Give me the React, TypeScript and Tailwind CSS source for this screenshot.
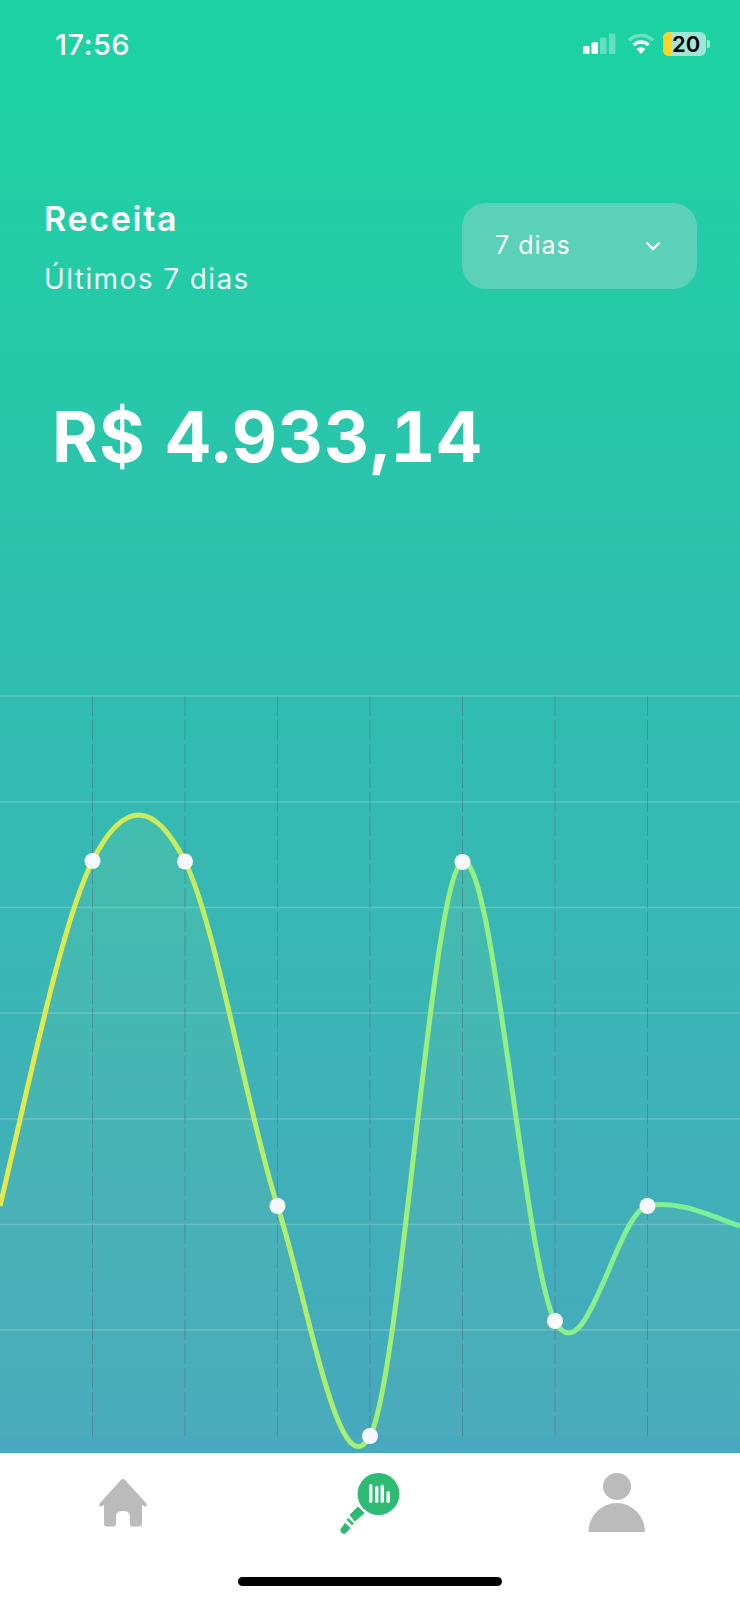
import React from "react";

const pts: [number, number, number][] = [
  [0, 1206, -4.2],
  [92.5, 861, -2.0],
  [185, 861.5, 2.0],
  [277.5, 1206, 3.1],
  [370, 1436, -1.86],
  [462.5, 862, -0.4],
  [555, 1321, 1.86],
  [647.5, 1206, -0.2],
  [740, 1226, 0.35],
];

function curve() {
  let d = `M${pts[0][0]} ${pts[0][1]}`;
  for (let i = 0; i < pts.length - 1; i++) {
    const [x0, y0, m0] = pts[i];
    const [x1, y1, m1] = pts[i + 1];
    const h = (x1 - x0) / 3;
    d += ` C${x0 + h} ${y0 + m0 * h} ${x1 - h} ${y1 - m1 * h} ${x1} ${y1}`;
  }
  return d;
}

function Chart() {
  const d = curve();
  const hs = [696, 802, 907.5, 1013, 1119, 1224.5, 1330];
  const vs = [92.5, 185, 277.5, 370, 462.5, 555, 647.5];
  const dots = pts.slice(1, 8);
  return (
    <svg className="block w-[740px] h-[773px] mt-auto" viewBox="0 680 740 773">
      <defs>
        <linearGradient id="ln" gradientUnits="userSpaceOnUse" x1="0" y1="0" x2="740" y2="0">
          <stop offset="0" stopColor="#e6e94a" />
          <stop offset="0.5" stopColor="#a3ef76" />
          <stop offset="1" stopColor="#76f09b" />
        </linearGradient>
        <linearGradient id="ar" gradientUnits="userSpaceOnUse" x1="0" y1="815" x2="0" y2="1437">
          <stop offset="0" stopColor="#d5e87a" stopOpacity="0.08" />
          <stop offset="1" stopColor="#d5e87a" stopOpacity="0.03" />
        </linearGradient>
      </defs>
      <path d={`${d} L740 1437 L0 1437 Z`} fill="url(#ar)" />
      {hs.map((y) => (
        <line key={y} x1="0" x2="740" y1={y} y2={y} stroke="#ffffff" strokeOpacity="0.2" strokeWidth="1.5" />
      ))}
      {vs.map((x) => (
        <line key={x} x1={x} x2={x} y1="696" y2="1437" stroke="#4b6b80" strokeOpacity="0.5" strokeWidth="1" strokeDasharray="20 4" />
      ))}
      <path d={d} fill="none" stroke="url(#ln)" strokeWidth="5" />
      {dots.map((p) => (
        <circle key={p[0]} cx={p[0]} cy={p[1]} r="8" fill="#f6f8fc" />
      ))}
    </svg>
  );
}

function StatusIcons() {
  return (
    <div className="flex items-center">
      <svg width="36" height="22" viewBox="0 0 36 22" className="block">
        <rect x="0" y="13" width="6.5" height="8" rx="1.5" fill="#fff" />
        <rect x="8.5" y="9" width="6.5" height="12" rx="1.5" fill="#fff" />
        <rect x="17" y="4.5" width="6.5" height="16.5" rx="1.5" fill="#fff" fillOpacity="0.3" />
        <rect x="26" y="0.5" width="6.5" height="20.5" rx="1.5" fill="#fff" fillOpacity="0.3" />
      </svg>
      <svg width="30" height="22" viewBox="0 0 30 22" className="block ml-[7px]">
        <path d="M3 7.2 A17.5 17.5 0 0 1 27 7.2" fill="none" stroke="#fff" strokeOpacity="0.35" strokeWidth="3.6" />
        <path d="M7.5 12 A11 11 0 0 1 22.5 12" fill="none" stroke="#fff" strokeWidth="3.4" />
        <path d="M15 21 L10.5 16 A6.5 6.5 0 0 1 19.5 16 Z" fill="#fff" />
      </svg>
      <div className="ml-[7px] flex items-center w-[43px] h-[24px] rounded-[6px] bg-[#a3e6d5]">
        <div className="w-[8px] h-full rounded-l-[6px] bg-[#fdd225]" />
        <span className="ml-[1px] leading-none text-[22px] font-semibold text-black">20</span>
      </div>
      <div className="w-[3px] h-[8px] ml-[1px] rounded-r-[2px] bg-[#a3e6d5]" />
    </div>
  );
}

export default function App() {
  return (
    <div className="w-[740px] h-[1600px] flex flex-col bg-white text-white font-['Inter',sans-serif] overflow-hidden">
      <main className="h-[1453px] flex flex-col bg-gradient-to-b from-[#1dd2a2] from-[5%] via-[#2ebeaf] via-[45%] to-[#47a8be]">
        <div className="h-[64px] pt-[27px] pl-[55px] pr-[30px] flex justify-between items-start">
          <span className="text-[29px] leading-[36px] font-medium tracking-[0.5px]">17:56</span>
          <div className="pt-[5px]"><StatusIcons /></div>
        </div>
        <div className="mt-[139px] pl-[44px] pr-[43px] flex justify-between items-start">
          <div>
            <div className="text-[34px] leading-[40px] font-semibold tracking-[1.7px] -mt-[4px]">Receita</div>
            <div className="mt-[22px] text-[28px] leading-[36px] tracking-[1.4px] text-white/95">Últimos 7 dias</div>
          </div>
          <div className="w-[235px] h-[86px] rounded-[24px] bg-[#5ad1b8] pl-[33px] pr-[36px] flex items-center justify-between">
            <span className="text-[25px] tracking-[1px]">7 dias</span>
            <svg width="16" height="10" viewBox="0 0 16 10"><path d="M1.5 1.5 L8 8 L14.5 1.5" fill="none" stroke="#fff" strokeWidth="2.4" /></svg>
          </div>
        </div>
        <div className="mt-[98px] pl-[52px] text-[70px] leading-[84px] font-bold tabular-nums tracking-[1px]">R$ 4.933,14</div>
        <Chart />
      </main>
      <nav className="relative flex-1 bg-white">
        <svg className="absolute left-[99px] top-[25px]" width="48" height="50" viewBox="0 0 48 50">
          <path d="M24 1 C25 1 26 1.5 27 3 L47 25 C48.5 27 47.5 29 45.5 28.5 L43 27 L43 45 C43 47.5 42 48.5 40 48.5 L33 48.5 C31.5 48.5 31 47.5 31 46 L31 39 C31 35 29 33 24 33 C19 33 17 35 17 39 L17 46 C17 47.5 16.5 48.5 15 48.5 L8 48.5 C6 48.5 5 47.5 5 45 L5 27 L2.5 28.5 C0.5 29 -0.5 27 1 25 L21 3 C22 1.5 23 1 24 1 Z" fill="#bbbbbb" />
        </svg>
        <svg className="absolute left-[336px] top-[18px]" width="66" height="66" viewBox="0 0 66 66">
          <circle cx="42.5" cy="23" r="21" fill="#2dbb73" />
          <rect x="33" y="13" width="3.4" height="19" rx="1.7" fill="#fff" />
          <rect x="39" y="15" width="3.4" height="17" rx="1.7" fill="#fff" />
          <rect x="44.5" y="13.5" width="3.4" height="18.5" rx="1.7" fill="#fff" />
          <rect x="50.5" y="20" width="3.4" height="12" rx="1.7" fill="#fff" />
          <path d="M22 36 L28 42 L19 50 L14 44 Z" fill="#2dbb73" stroke="#2dbb73" strokeWidth="1" strokeLinejoin="round" />
          <path d="M11.4 47.9 L17 53.5" stroke="#2dbb73" strokeWidth="2.5" />
          <path d="M9 51.7 L14.7 57 L9 63 C6.5 63.5 3.5 60.5 4.7 58 Z" fill="#2dbb73" />
        </svg>
        <svg className="absolute left-[588px] top-[19px]" width="58" height="62" viewBox="0 0 58 62">
          <ellipse cx="29" cy="14.5" rx="14" ry="13.5" fill="#bbbbbb" />
          <path d="M0.5 60 A28.25 29 0 0 1 57 60 Z" fill="#bbbbbb" />
        </svg>
        <div className="absolute left-[238px] top-[124px] w-[264px] h-[9px] rounded-full bg-black" />
      </nav>
    </div>
  );
}
